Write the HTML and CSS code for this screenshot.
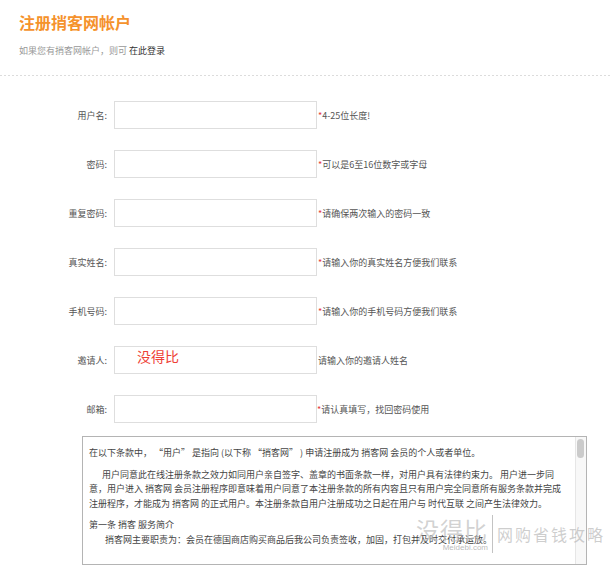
FILE: index.html
```html
<!DOCTYPE html>
<html lang="zh-CN">
<head>
<meta charset="utf-8">
<title>注册捎客网帐户</title>
<link rel="stylesheet" href="styles.css">
</head>
<body>
<div class="page">
  <header class="head">
    <h1 class="title">注册捎客网帐户</h1>
    <p class="sub">如果您有捎客网帐户，则可 <a class="login" href="#">在此登录</a></p>
  </header>
  <div class="divider"></div>

  <form class="form">
    <div class="row">
      <label class="lbl">用户名:</label>
      <input class="inp" type="text">
      <span class="hint"><i class="req">*</i>4-25位长度!</span>
    </div>
    <div class="row">
      <label class="lbl">密码:</label>
      <input class="inp" type="password">
      <span class="hint"><i class="req">*</i>可以是6至16位数字或字母</span>
    </div>
    <div class="row">
      <label class="lbl">重复密码:</label>
      <input class="inp" type="password">
      <span class="hint"><i class="req">*</i>请确保两次输入的密码一致</span>
    </div>
    <div class="row">
      <label class="lbl">真实姓名:</label>
      <input class="inp" type="text">
      <span class="hint"><i class="req">*</i>请输入你的真实姓名方便我们联系</span>
    </div>
    <div class="row">
      <label class="lbl">手机号码:</label>
      <input class="inp" type="text">
      <span class="hint"><i class="req">*</i>请输入你的手机号码方便我们联系</span>
    </div>
    <div class="row">
      <label class="lbl">邀请人:</label>
      <input class="inp inp-red" type="text" value="没得比">
      <span class="hint">请输入你的邀请人姓名</span>
    </div>
    <div class="row">
      <label class="lbl">邮箱:</label>
      <input class="inp" type="text">
      <span class="hint hint-tight"><i class="req">*</i>请认真填写，找回密码使用</span>
    </div>
  </form>

  <div class="terms">
    <div class="terms-body">
      <p class="line">在以下条款中， “用户” 是指向 (以下称 “捎客网” ) 申请注册成为 捎客网 会员的个人或者单位。</p>
      <p class="line"><span class="indent">用户同意此在线注册条款之效力如同用户亲自签字、盖章的书面条款一样，对用户具有法律约束力。 用户进一步同</span><br>意，用户进入 捎客网 会员注册程序即意味着用户同意了本注册条款的所有内容且只有用户完全同意所有服务条款并完成<br>注册程序，才能成为 捎客网 的正式用户。本注册条款自用户注册成功之日起在用户与 时代互联 之间产生法律效力。</p>
      <p class="line">第一条 捎客 服务简介<br><span class="indent2">捎客网主要职责为：会员在德国商店购买商品后我公司负责签收，加固，打包并及时交付承运放。</span></p>
    </div>
    <div class="scrollbar"><span class="thumb"></span></div>
  </div>

  <div class="watermark">
    <div class="wm-left">
      <span class="wm-big">没得比</span>
      <span class="wm-url">Meidebi.com</span>
    </div>
    <span class="wm-bar"></span>
    <span class="wm-slogan">网购省钱攻略</span>
  </div>
</div>
</body>
</html>
```

FILE: styles.css
```css
* {
  box-sizing: border-box;
}

html, body {
  margin: 0;
  padding: 0;
  background: #fff;
}

body {
  font-family: "Noto Sans CJK SC", "Liberation Sans", sans-serif;
  font-size: 9px;
  color: #555;
}

.page {
  position: relative;
  width: 610px;
  height: 569px;
  overflow: hidden;
}

.head {
  padding: 12px 19px 0;
}

.title {
  margin: 0;
  font-size: 16px;
  line-height: 20px;
  font-weight: bold;
  color: #f5922c;
}

.sub {
  margin: 12px 0 0;
  line-height: 14px;
  color: #999;
}

.login {
  color: #333;
  text-decoration: none;
}

.divider {
  margin-top: 17px;
  height: 1px;
  background-image: linear-gradient(to right, #dcdcdc 50%, transparent 50%);
  background-size: 4px 1px;
}

.form {
  display: flex;
  flex-direction: column;
  gap: 21px;
  padding-top: 25px;
  margin: 0;
}

.row {
  display: flex;
  align-items: center;
  height: 28px;
}

.lbl {
  width: 107px;
  margin-right: 7px;
  text-align: right;
  color: #555;
}

.inp {
  width: 203px;
  height: 28px;
  border: 1px solid #dedede;
  background: #fff;
  padding: 0 6px;
  font-family: inherit;
  font-size: 9px;
  outline: none;
}

.inp-red {
  padding-left: 22px;
  padding-bottom: 8px;
  font-size: 14px;
  color: #ee3f36;
}

.hint {
  margin-left: 1px;
  color: #555;
}

.hint-tight {
  margin-left: 0;
}

.req {
  font-style: normal;
  color: #e4393c;
}

.terms {
  display: flex;
  margin: 13px 0 0 82px;
  width: 505px;
  height: 129px;
  border: 1px solid #b4b4b4;
  color: #444;
}

.terms-body {
  flex: 1;
  min-width: 0;
  overflow: hidden;
  padding: 9px 6px;
  line-height: 14.5px;
}

.line {
  margin: 0 0 7px;
  white-space: nowrap;
}

.indent {
  padding-left: 13px;
}

.indent2 {
  padding-left: 16px;
}

.scrollbar {
  width: 11px;
  flex: none;
  background: #f8f8f8;
  border-left: 1px solid #e6e6e6;
  padding: 2px 1px 0 1px;
}

.thumb {
  display: block;
  width: 7px;
  height: 19px;
  background: #cbcbcb;
  border-radius: 4px;
}

.watermark {
  position: absolute;
  left: 416px;
  top: 515px;
  display: flex;
  align-items: center;
  gap: 4px;
  pointer-events: none;
}

.wm-left {
  display: flex;
  flex-direction: column;
  align-items: flex-end;
}

.wm-big {
  font-size: 23px;
  line-height: 27px;
  letter-spacing: 1px;
  color: rgba(190, 190, 190, 0.7);
}

.wm-url {
  font-family: "Liberation Sans", sans-serif;
  font-size: 8px;
  line-height: 10px;
  color: rgba(170, 170, 170, 0.8);
}

.wm-bar {
  width: 1px;
  height: 38px;
  background: rgba(170, 170, 170, 0.7);
}

.wm-slogan {
  font-size: 16px;
  letter-spacing: 2px;
  color: rgba(185, 185, 185, 0.7);
}
```
